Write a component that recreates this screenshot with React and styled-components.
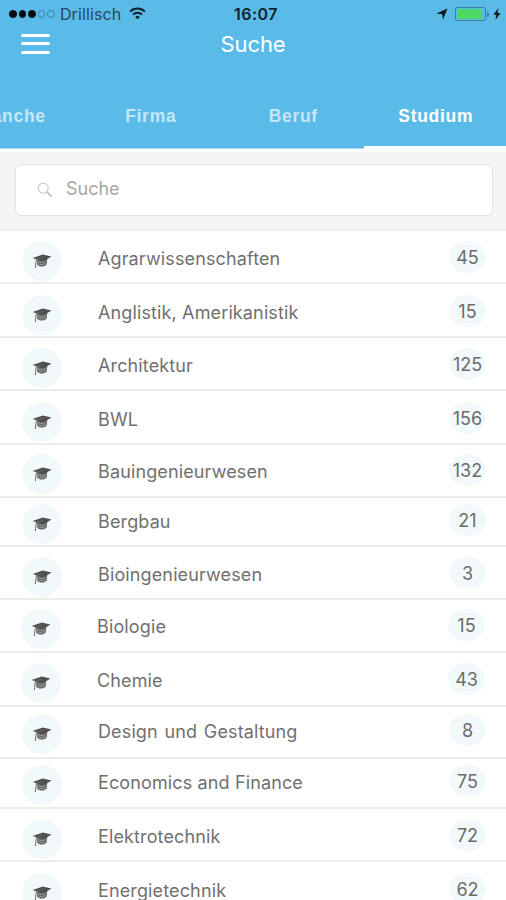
import React from 'react'
import styled, { createGlobalStyle } from 'styled-components'

const tabs = ['Branche', 'Firma', 'Beruf', 'Studium']

const subjects = [
    { name: 'Agrarwissenschaften', count: 45, height: 53, top: 10 },
    { name: 'Anglistik, Amerikanistik', count: 15, height: 54, top: 11 },
    { name: 'Architektur', count: 125, height: 53, top: 10 },
    { name: 'BWL', count: 156, height: 54, top: 11 },
    { name: 'Bauingenieurwesen', count: 132, height: 53, top: 9 },
    { name: 'Bergbau', count: 21, height: 49, top: 6 },
    { name: 'Bioingenieurwesen', count: 3, height: 53, top: 10 },
    { name: 'Biologie', count: 15, height: 53, top: 9, shift: 1 },
    { name: 'Chemie', count: 43, height: 54, top: 10, shift: 1 },
    { name: 'Design und Gestaltung', count: 8, height: 52, top: 7, wordGap: 1.5 },
    { name: 'Economics and Finance', count: 75, height: 50, top: 6 },
    { name: 'Elektrotechnik', count: 72, height: 53, top: 10 },
    { name: 'Energietechnik', count: 62, height: 54, top: 11 },
]

export default function App() {
    return (
        <Screen>
            <GlobalStyle />
            <Header>
                <StatusBar>
                    <Carrier>
                        <Dots>
                            <Dot $filled />
                            <Dot $filled />
                            <Dot $filled />
                            <Dot />
                            <Dot />
                        </Dots>
                        <CarrierName>Drillisch</CarrierName>
                        <WifiIcon />
                    </Carrier>
                    <Clock>16:07</Clock>
                    <Power>
                        <LocationIcon />
                        <Battery>
                            <Charge />
                        </Battery>
                        <BatteryTip />
                        <BoltIcon />
                    </Power>
                </StatusBar>
                <TitleBar>
                    <MenuButton aria-label="Menü">
                        <Line />
                        <Line />
                        <Line />
                    </MenuButton>
                    <Title>Suche</Title>
                </TitleBar>
                <Tabs>
                    {tabs.map((tab) => (
                        <Tab key={tab} $active={tab === 'Studium'}>{tab}</Tab>
                    ))}
                </Tabs>
            </Header>
            <SearchArea>
                <SearchBox>
                    <SearchIcon />
                    <SearchInput placeholder="Suche" />
                </SearchBox>
            </SearchArea>
            <List>
                {subjects.map((item) => (
                    <Row key={item.name} $height={item.height} $top={item.top} $shift={item.shift || 0}>
                        <IconCircle>
                            <CapIcon />
                        </IconCircle>
                        <Name $wordGap={item.wordGap || 0}>{item.name}</Name>
                        <Count>{item.count}</Count>
                    </Row>
                ))}
            </List>
        </Screen>
    )
}

function WifiIcon() {
    return (
        <svg width="17" height="13" viewBox="0 0 17 13" fill="none" stroke="#10222c" strokeWidth="2">
            <path d="M1.2 4.6a10.4 10.4 0 0 1 14.6 0" />
            <path d="M4 7.6a6.4 6.4 0 0 1 9 0" />
            <path d="M8.5 12.2 6.2 9.9a3.3 3.3 0 0 1 4.6 0z" fill="#10222c" stroke="none" />
        </svg>
    )
}

function LocationIcon() {
    return (
        <svg width="12" height="12" viewBox="0 0 12 12" fill="#0c1a22">
            <path d="M11.5 .5 7 11.5 6.2 6.2.5 5.4z" />
        </svg>
    )
}

function BoltIcon() {
    return (
        <svg width="8" height="12" viewBox="0 0 8 12" fill="#0c1a22">
            <path d="M5.4 0 .4 6.8h2.9L2.4 12l5.2-7H4.6z" />
        </svg>
    )
}

function SearchIcon() {
    return (
        <svg width="16" height="16" viewBox="0 0 16 16" fill="none" stroke="#bcbcbc">
            <circle cx="6.2" cy="6.2" r="5" strokeWidth="1" />
            <path d="M10 10l4.6 4.6" strokeWidth="1.7" />
        </svg>
    )
}

function CapIcon() {
    return (
        <svg width="20" height="16" viewBox="0 0 20 16">
            <path d="M5.2 6.6v5.2c2.2 2.5 7.6 2.3 9.6-.6l.4-5.2z" fill="#666" />
            <path d="M.6 4.9 10.8 1.4l8.6 2-7.8 5z" fill="#505050" />
            <path d="M6 8.6c2.4 1.5 5.6 1.2 8.4-.6M6.2 10.8c2.2 1.2 5 1.1 7.6-.4" stroke="#a9adae" strokeWidth=".7" fill="none" />
            <path d="M11 4.3 4.6 6.1C3.8 8.7 3.8 11.4 3.4 15" stroke="#666" strokeWidth="1" fill="none" />
        </svg>
    )
}

const GlobalStyle = createGlobalStyle`
    * {
        box-sizing: border-box;
    }
    body {
        margin: 0;
        background: #fff;
    }
`
const Screen = styled.div`
    width: 506px;
    height: 900px;
    overflow: hidden;
    background: #fff;
    font-family: Inter, "Liberation Sans", sans-serif;
`
const Header = styled.header`
    height: 149px;
    background: #5abae8;
`
const StatusBar = styled.div`
    display: grid;
    grid-template-columns: 1fr auto 1fr;
    align-items: center;
    height: 28px;
    padding: 0 5px 0 9px;
    color: #10222c;
`
const Carrier = styled.div`
    display: flex;
    align-items: center;
    svg {
        margin: 0 0 2px 8px;
    }
`
const Dots = styled.div`
    display: flex;
    gap: 2px;
`
const Dot = styled.span`
    width: 7.6px;
    height: 7.6px;
    border-radius: 50%;
    border: 1px solid ${(props) => (props.$filled ? '#05090c' : '#3b7a99')};
    background: ${(props) => (props.$filled ? '#05090c' : 'transparent')};
`
const CarrierName = styled.span`
    margin-left: 5px;
    font-size: 16px;
    line-height: 20px;
    letter-spacing: 0.1px;
    color: #24485a;
`
const Clock = styled.span`
    margin-left: 2px;
    font-size: 16px;
    font-weight: 600;
    line-height: 20px;
    letter-spacing: 0.5px;
`
const Power = styled.div`
    display: flex;
    justify-content: flex-end;
    align-items: center;
`
const Battery = styled.div`
    width: 31px;
    height: 14px;
    margin-left: 7px;
    padding: 1px;
    border: 1px solid #3f7f9d;
    border-radius: 2px;
`
const Charge = styled.div`
    width: 25px;
    height: 100%;
    background: #4cd964;
`
const BatteryTip = styled.span`
    width: 2px;
    height: 5px;
    margin: 0 4px 0 1px;
    background: #3f7f9d;
    border-radius: 0 2px 2px 0;
`
const TitleBar = styled.div`
    display: grid;
    grid-template-columns: 1fr auto 1fr;
    align-items: center;
    height: 32px;
    padding: 0 21px;
`
const MenuButton = styled.button`
    display: flex;
    flex-direction: column;
    justify-content: space-between;
    width: 29px;
    height: 20px;
    margin-bottom: 1px;
    padding: 0;
    background: transparent;
    border: none;
    cursor: pointer;
`
const Line = styled.span`
    width: 29px;
    height: 3px;
    border-radius: 2px;
    background: #fff;
`
const Title = styled.h1`
    margin: 0;
    font-size: 22px;
    font-weight: 400;
    line-height: 28px;
    letter-spacing: -0.1px;
    color: #fff;
`
const Tabs = styled.nav`
    display: flex;
    justify-content: flex-end;
    height: 89px;
`
const Tab = styled.a`
    flex: none;
    display: flex;
    justify-content: center;
    width: 142.5px;
    padding: 46px 0 0 2px;
    border-bottom: ${(props) => (props.$active ? '3px solid #fff' : '1px solid #a4d9f2')};
    font-family: "Liberation Sans", sans-serif;
    font-size: 17.5px;
    font-weight: 700;
    line-height: 20px;
    letter-spacing: 0.7px;
    color: ${(props) => (props.$active ? '#fff' : '#c4e8f9')};
`
const SearchArea = styled.div`
    height: 82px;
    padding: 12px 13px 13px 15px;
    background: #f5f5f5;
    border-top: 3px solid #fdfdfd;
    border-bottom: 2px solid #ececec;
`
const SearchBox = styled.label`
    display: flex;
    align-items: center;
    height: 52px;
    padding: 0 21px;
    background: #fff;
    border: 1.5px solid #e2e2e2;
    border-radius: 6px;
`
const SearchInput = styled.input`
    flex: 1;
    margin: 0 0 4px 13px;
    padding: 0;
    border: none;
    outline: none;
    background: transparent;
    font-family: inherit;
    font-size: 18px;
    &::placeholder {
        color: #a6a6a6;
        opacity: 1;
    }
`
const List = styled.ul`
    margin: 0;
    padding: 0;
    list-style: none;
`
const Row = styled.li`
    display: flex;
    align-items: flex-start;
    height: ${(props) => props.$height}px;
    padding: ${(props) => props.$top}px ${(props) => 20 + props.$shift}px 0 ${(props) => 22 - props.$shift}px;
    border-bottom: 2px solid #ececec;
`
const IconCircle = styled.span`
    display: flex;
    flex: none;
    align-items: center;
    justify-content: center;
    width: 40px;
    height: 40px;
    border-radius: 50%;
    background: #f2f9fb;
`
const Name = styled.span`
    flex: 1;
    margin-left: 36px;
    padding-top: 7px;
    font-size: 18px;
    font-weight: 400;
    line-height: 22px;
    letter-spacing: 0.13px;
    word-spacing: ${(props) => props.$wordGap}px;
    color: #707070;
    white-space: nowrap;
`
const Count = styled.span`
    display: flex;
    align-items: center;
    justify-content: center;
    width: 37px;
    height: 32px;
    padding-top: 2px;
    border-radius: 50%;
    background: #f2f9fb;
    font-size: 18px;
    line-height: 22px;
    color: #6c6c6c;
`
